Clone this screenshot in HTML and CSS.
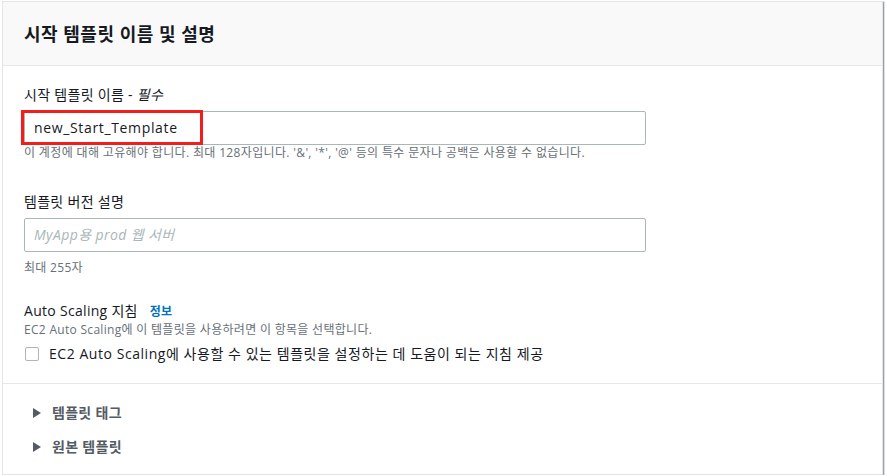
FILE: index.html
```html
<!DOCTYPE html>
<html lang="ko">
<head>
<meta charset="utf-8">
<link rel="stylesheet" href="styles.css">
</head>
<body>
<div class="card">
  <div class="card-header">
    <h2 class="title">시작 템플릿 이름 및 설명</h2>
  </div>
  <div class="card-body">
    <div class="field">
      <label class="label">시작 템플릿 이름 - <i>필수</i></label>
      <div class="input-wrap">
        <div class="input">new_Start_Template</div>
        <div class="highlight"></div>
      </div>
      <div class="hint hint-first">이 계정에 대해 고유해야 합니다. 최대 128자입니다. '&amp;', '*', '@' 등의 특수 문자나 공백은 사용할 수 없습니다.</div>
    </div>
    <div class="field field-second">
      <label class="label">템플릿 버전 설명</label>
      <div class="input placeholder">MyApp용 prod 웹 서버</div>
      <div class="hint hint-second">최대 255자</div>
    </div>
    <div class="field field-third">
      <div class="label">Auto Scaling 지침 <a class="info">정보</a></div>
      <div class="hint desc">EC2 Auto Scaling에 이 템플릿을 사용하려면 이 항목을 선택합니다.</div>
      <div class="check-row">
        <span class="checkbox"></span>
        <span class="check-label">EC2 Auto Scaling에 사용할 수 있는 템플릿을 설정하는 데 도움이 되는 지침 제공</span>
      </div>
    </div>
  </div>
  <div class="expanders">
    <div class="expander"><span class="caret"></span>템플릿 태그</div>
    <div class="expander"><span class="caret"></span>원본 템플릿</div>
  </div>
</div>
</body>
</html>
```

FILE: styles.css
```css
html, body {
  margin: 0;
  padding: 0;
  background: #ffffff;
}
body {
  padding: 1px 0 0 2px;
  font-family: "Open Sans", "Noto Sans CJK KR", sans-serif;
  color: #16191f;
  letter-spacing: 0.3px;
}
.card {
  width: 879px;
  height: 472px;
  border: 1px solid #e4e6e6;
  box-shadow: 1px 1px 1px 0 rgba(0, 28, 36, 0.35), 2px 0 0 0 rgba(0, 28, 36, 0.08);
  background: #fff;
  box-sizing: content-box;
}
.card-header {
  background: #f9f9f9;
  border-bottom: 1px solid #e6e8e8;
  height: 63px;
  padding: 0 21px;
  display: flex;
  align-items: center;
}
.title {
  margin: 0;
  font-size: 18px;
  font-weight: 700;
  letter-spacing: 0.5px;
  font-family: "Open Sans", "Noto Sans CJK KR", sans-serif;
  line-height: 24px;
  padding-top: 1px;
}
.card-body {
  padding: 18px 21px 0 21px;
  height: 299px;
  border-bottom: 1px solid #e6e8e8;
}
.field {
  display: flex;
  flex-direction: column;
  width: 622px;
}
.label {
  font-size: 14px;
  line-height: 22px;
  height: 22px;
}
.label i {
  font-style: italic;
}
.input-wrap {
  position: relative;
  margin-top: 5px;
}
.input {
  height: 34px;
  box-sizing: border-box;
  border: 1px solid #aab7b8;
  border-radius: 2px;
  padding: 0 9px;
  font-size: 14px;
  line-height: 32px;
  color: #16191f;
  letter-spacing: 0.65px;
}
.highlight {
  position: absolute;
  left: -3px;
  top: -1px;
  width: 182px;
  height: 35px;
  box-sizing: border-box;
  border: 3px solid #f51c1c;
}
.placeholder {
  margin-top: 5px;
  color: #aab7b8;
  font-style: italic;
  letter-spacing: 0.4px;
}
.hint {
  font-size: 12px;
  line-height: 16px;
  color: #687078;
}
.hint-first {
  margin-top: 0;
  white-space: nowrap;
  letter-spacing: 0.35px;
}
.field-second {
  margin-top: 30px;
}
.hint-second {
  margin-top: 8px;
}
.field-third {
  margin-top: 24px;
}
.info {
  font-size: 12px;
  font-weight: 700;
  color: #0073bb;
  margin-left: 8px;
}
.desc {
  margin-top: 0;
}
.check-row {
  display: flex;
  align-items: center;
  margin-top: 6px;
  white-space: nowrap;
}
.checkbox {
  width: 14px;
  height: 14px;
  border: 1px solid #aab7b8;
  border-radius: 2px;
  box-sizing: border-box;
  margin-left: 1px;
  margin-right: 10px;
}
.check-label {
  font-size: 14px;
  line-height: 20px;
  letter-spacing: 0.55px;
}
.expanders {
  padding: 18px 21px 0 28px;
  display: flex;
  flex-direction: column;
  gap: 12px;
}
.expander {
  display: flex;
  align-items: center;
  font-size: 14px;
  font-weight: 700;
  line-height: 22px;
  color: #545b64;
}
.caret {
  width: 0;
  height: 0;
  border-top: 5px solid transparent;
  border-bottom: 5px solid transparent;
  border-left: 8px solid #545b64;
  margin-left: 2px;
  margin-right: 11px;
}
```
